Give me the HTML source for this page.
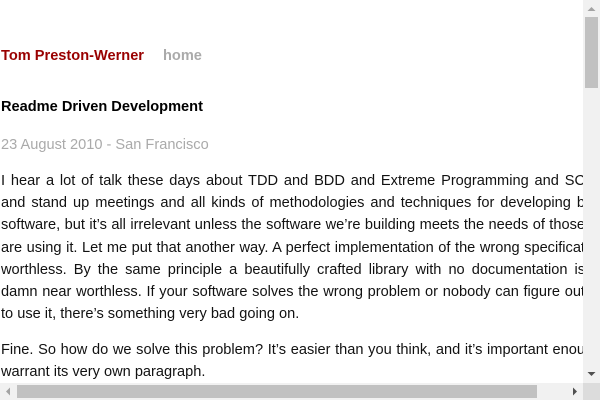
<!DOCTYPE html>
<html><head><meta charset="utf-8"><style>
html,body{margin:0;padding:0;width:600px;height:400px;overflow:hidden;background:#fff;font-family:"Liberation Sans",Arial,sans-serif;font-size:14.6px;}
#c{position:absolute;left:0;top:0;width:583px;height:383px;overflow:hidden;}
.a{position:absolute;left:1px;white-space:nowrap;}
.l{position:absolute;left:1px;width:584px;text-align:justify;text-align-last:justify;white-space:nowrap;color:#111;}
.l span{display:inline-block;width:584px;white-space:normal;text-align:justify;text-align-last:justify;}
</style></head><body>
<div id="c">
<div class="a" style="top:48px;font-weight:bold;color:#990000">Tom Preston-Werner</div>
<div class="a" style="top:48px;left:163px;font-weight:bold;color:#aaa">home</div>
<div class="a" style="top:99px;font-weight:bold;color:#000">Readme Driven Development</div>
<div class="a" style="top:137px;color:#aaa">23 August 2010 - San Francisco</div>
<div class="l" style="top:173px"><span>I hear a lot of talk these days about TDD and BDD and Extreme Programming and SC</span></div>
<div class="l" style="top:195.2px"><span>and stand up meetings and all kinds of methodologies and techniques for developing b</span></div>
<div class="l" style="top:217.4px"><span>software, but it’s all irrelevant unless the software we’re building meets the needs of those</span></div>
<div class="l" style="top:239.6px"><span>are using it. Let me put that another way. A perfect implementation of the wrong specificat</span></div>
<div class="l" style="top:261.8px"><span>worthless. By the same principle a beautifully crafted library with no documentation is</span></div>
<div class="l" style="top:284px"><span>damn near worthless. If your software solves the wrong problem or nobody can figure out</span></div>
<div class="a" style="top:306.2px;color:#111">to use it, there’s something very bad going on.</div>
<div class="l" style="top:341.5px"><span>Fine. So how do we solve this problem? It’s easier than you think, and it’s important enou</span></div>
<div class="a" style="top:363.7px;color:#111">warrant its very own paragraph.</div>
</div>
<div style="position:absolute;left:583px;top:0;width:17px;height:400px;background:#f1f1f1"></div>
<div style="position:absolute;left:585px;top:17px;width:13px;height:71px;background:#c1c1c1"></div>
<div style="position:absolute;left:0;top:383px;width:600px;height:17px;background:#f1f1f1"></div>
<div style="position:absolute;left:17px;top:385px;width:520px;height:13px;background:#c1c1c1"></div>
<div style="position:absolute;left:583px;top:383px;width:17px;height:17px;background:#dcdcdc"></div>
<svg style="position:absolute;left:0;top:0" width="600" height="400">
<polygon points="587.5,11 591.5,7 595.5,11" fill="#a3a3a3"/>
<polygon points="587.5,372 591.5,376 595.5,372" fill="#505050"/>
<polygon points="6,391.5 10,387.5 10,395.5" fill="#a3a3a3"/>
<polygon points="577,391.5 573,387.5 573,395.5" fill="#505050"/>
</svg>
</body></html>
